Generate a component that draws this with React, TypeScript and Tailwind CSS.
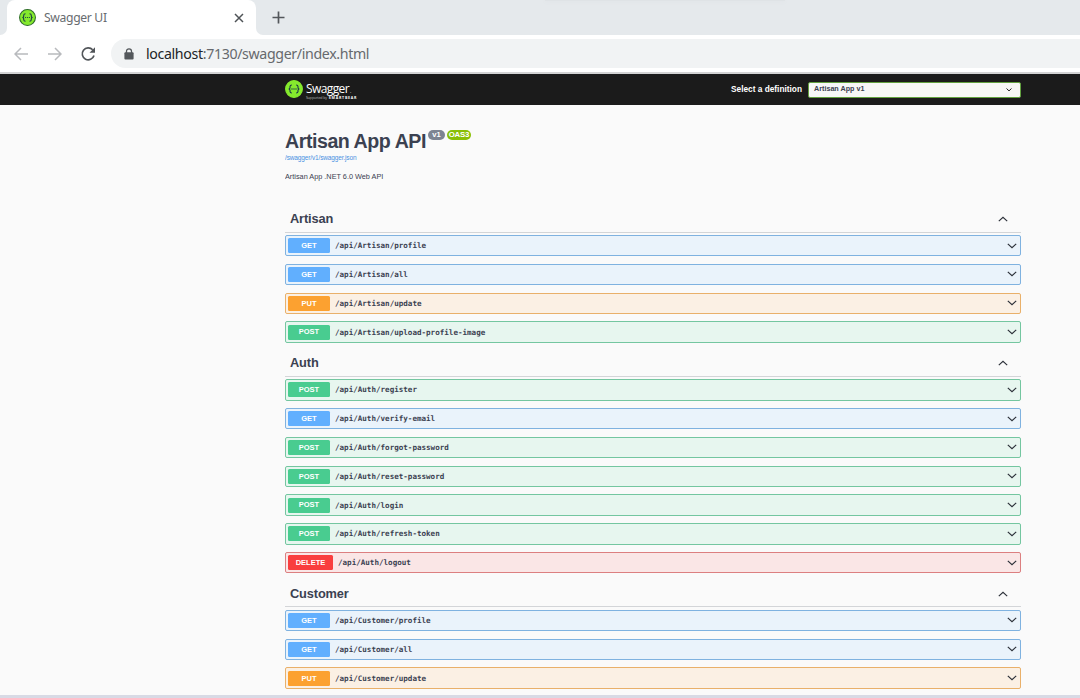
type Method = "GET" | "PUT" | "POST" | "DELETE";

const rowStyles: Record<Method, string> = {
  GET: "border-[#7fb2e0] bg-[#eaf3fb]",
  PUT: "border-[#e9b06a] bg-[#fbf0e4]",
  POST: "border-[#74c6a0] bg-[#e7f6ef]",
  DELETE: "border-[#dc7f80] bg-[#fae6e6]",
};

const badgeStyles: Record<Method, string> = {
  GET: "w-[42px] bg-[#61affe]",
  PUT: "w-[42px] bg-[#fca130]",
  POST: "w-[42px] bg-[#49cc90]",
  DELETE: "w-[45px] bg-[#f93e3e]",
};

const sections: { name: string; operations: [Method, string][] }[] = [
  {
    name: "Artisan",
    operations: [
      ["GET", "/api/Artisan/profile"],
      ["GET", "/api/Artisan/all"],
      ["PUT", "/api/Artisan/update"],
      ["POST", "/api/Artisan/upload-profile-image"],
    ],
  },
  {
    name: "Auth",
    operations: [
      ["POST", "/api/Auth/register"],
      ["GET", "/api/Auth/verify-email"],
      ["POST", "/api/Auth/forgot-password"],
      ["POST", "/api/Auth/reset-password"],
      ["POST", "/api/Auth/login"],
      ["POST", "/api/Auth/refresh-token"],
      ["DELETE", "/api/Auth/logout"],
    ],
  },
  {
    name: "Customer",
    operations: [
      ["GET", "/api/Customer/profile"],
      ["GET", "/api/Customer/all"],
      ["PUT", "/api/Customer/update"],
    ],
  },
];

function SwaggerMark({ size, ring }: { size: number; ring: string }) {
  return (
    <svg width={size} height={size} viewBox="0 0 18 18" className="shrink-0" fill="none">
      <circle cx="9" cy="9" r="8.4" fill="#85ea2d" stroke={ring} strokeWidth="1.1" />
      <path
        d="M6.9 5c-1.4 0-1.9.4-1.9 1.5v1.2c0 .8-.4 1.3-1.4 1.3 1 0 1.4.5 1.4 1.3v1.2c0 1.1.5 1.5 1.9 1.5M11.1 5c1.4 0 1.9.4 1.9 1.5v1.2c0 .8.4 1.3 1.4 1.3-1 0-1.4.5-1.4 1.3v1.2c0 1.1-.5 1.5-1.9 1.5"
        stroke="#173647"
        strokeWidth="1.1"
      />
      <g fill="#173647">
        <circle cx="7" cy="9" r=".65" />
        <circle cx="9" cy="9" r=".65" />
        <circle cx="11" cy="9" r=".65" />
      </g>
    </svg>
  );
}

function Chevron({ up = false }: { up?: boolean }) {
  return (
    <svg width="10" height="6" viewBox="0 0 10 6" fill="none" className="shrink-0">
      <path d={up ? "M.8 5.2 5 1.3l4.2 3.9" : "M.8.8 5 4.7 9.2.8"} stroke="#2b2f38" strokeWidth="1.15" />
    </svg>
  );
}

function TabStrip() {
  return (
    <div className="flex h-[35px] bg-[#e5e9ec]">
      <div className="flex w-[7px] items-end bg-white">
        <div className="h-full w-full rounded-br-[7px] bg-[#e5e9ec]" />
      </div>
      <div className="bg-[#e5e9ec]">
        <div className="flex h-[35px] w-[249px] items-center rounded-t-[8px] bg-white pr-[12px] pl-[12px]">
          <SwaggerMark size={17} ring="#2d6b2a" />
          <span className="ml-[8px] pt-[2px] text-[12.2px] tracking-[-0.35px] text-[#686c70]">Swagger UI</span>
          <svg width="10" height="10" viewBox="0 0 10 10" className="ml-auto">
            <path d="m1 1 8 8M9 1 1 9" stroke="#4f5357" strokeWidth="1.5" />
          </svg>
        </div>
      </div>
      <div className="w-[7px] bg-white">
        <div className="h-full rounded-bl-[7px] bg-[#e5e9ec]" />
      </div>
      <svg width="13" height="13" viewBox="0 0 13 13" className="mt-[11px] ml-[9px]">
        <path d="M6.5.5v12M.5 6.5h12" stroke="#53575b" strokeWidth="1.7" />
      </svg>
      <div className="ml-[260px] h-px w-[240px] bg-[#dfe3e6] shadow-[0_0_4px_#d9dde0]" />
    </div>
  );
}

function AddressBar() {
  return (
    <div className="flex h-[39px] items-center border-b-2 border-[#d2d3d4] bg-white">
      <svg width="14" height="14" viewBox="0 0 14 14" fill="none" className="ml-[14px]">
        <path d="M14 7H1.2M7 1 1 7l6 6" stroke="#b8babd" strokeWidth="1.5" />
      </svg>
      <svg width="14" height="14" viewBox="0 0 14 14" fill="none" className="ml-[20px]">
        <path d="M0 7h12.8M7 1l6 6-6 6" stroke="#b8babd" strokeWidth="1.5" />
      </svg>
      <svg width="16" height="16" viewBox="0 0 16 16" className="ml-[18px]">
        <path d="M12.7 3.8A6 6 0 1 0 14 9.5" fill="none" stroke="#515559" strokeWidth="1.7" />
        <path d="M15 1.3v5.5H9.5z" fill="#515559" />
      </svg>
      <div className="ml-[15px] flex h-[29px] grow items-center rounded-l-full bg-[#f1f3f4] pl-[13px]">
        <svg width="10" height="12" viewBox="0 0 10 12">
          <path d="M2.5 5V3.3a2.5 2.5 0 0 1 5 0V5" fill="none" stroke="#54585c" strokeWidth="1.3" />
          <rect x=".4" y="4.3" width="9.2" height="7.3" rx="1" fill="#54585c" />
        </svg>
        <span className="ml-[12px] pt-px text-[14.2px] tracking-[-0.36px] whitespace-nowrap text-[#66696d]">
          <span className="text-[#222427]">localhost</span>:7130/swagger/index.html
        </span>
      </div>
    </div>
  );
}

function TopBar() {
  return (
    <header className="h-[31px] bg-[#1b1b1b]">
      <div className="ml-[285px] flex h-full w-[736px] items-center">
        <div className="-mt-[2px]">
          <SwaggerMark size={18} ring="#85ea2d" />
        </div>
        <div className="ml-[3px] flex flex-col pt-[2px] font-['Open_Sans','Noto_Sans',sans-serif] text-white">
          <span className="h-[14px] text-[12px] leading-[16px] tracking-[-0.6px]">
            Swagger<span className="ml-px text-[5px]">.</span>
          </span>
          <span className="flex h-[5px] items-center gap-[2px] text-[3.6px] leading-[5px] whitespace-nowrap">
            <span className="text-[#b5b5b5] tracking-[-0.15px]">Supported by</span>
            <b className="tracking-[0.75px]">SMARTBEAR</b>
          </span>
        </div>
        <div className="ml-auto flex items-center">
          <span className="text-[8.3px] font-bold text-white">Select a definition</span>
          <div className="ml-[6px] flex h-[16px] w-[213px] items-center justify-between rounded-[2px] border border-[#62a03f] bg-[#f7f7f7] pr-[8px] pl-[5px] text-[7.2px] font-bold text-[#3b4151]">
            Artisan App v1
            <svg width="6" height="4" viewBox="0 0 6 4" fill="none">
              <path d="m.5.5 2.5 2.4L5.5.5" stroke="#222" />
            </svg>
          </div>
        </div>
      </div>
    </header>
  );
}

function Info() {
  return (
    <div className="h-[101px] pt-[24px] text-[#3b4151]">
      <div className="flex h-[24px] items-start">
        <h1 className="text-[19.6px] leading-[25px] font-bold tracking-[-0.45px] whitespace-nowrap">Artisan App API</h1>
        <span className="mt-px ml-[2px] flex h-[10px] w-[17px] items-center justify-center rounded-full bg-[#7d8492] text-[7.6px] font-bold text-white">
          v1
        </span>
        <span className="mt-px ml-[2px] flex h-[10px] w-[24px] items-center justify-center rounded-full bg-[#89bf04] text-[7.8px] font-bold tracking-[-0.15px] text-white">
          OAS3
        </span>
      </div>
      <a className="block text-[6.5px] leading-[9px] tracking-[-0.14px] text-[#4990e2]">/swagger/v1/swagger.json</a>
      <p className="mt-[10px] text-[7.3px] leading-[10px]">Artisan App .NET 6.0 Web API</p>
    </div>
  );
}

function Operation({ method, path }: { method: Method; path: string }) {
  return (
    <div className={`mb-[7.42px] flex h-[21.43px] items-center rounded-[2px] border pr-[3px] pl-[2px] ${rowStyles[method]}`}>
      <span
        className={`flex h-[15px] items-center justify-center rounded-[1.5px] text-[7.5px] font-bold text-white ${badgeStyles[method]}`}
      >
        {method}
      </span>
      <span className="ml-[5px] grow pt-px font-['DejaVu_Sans_Mono',monospace] text-[7.57px] leading-[10px] font-bold whitespace-nowrap text-[#3b4151]">
        {path}
      </span>
      <Chevron />
    </div>
  );
}

export default function App() {
  return (
    <div className="flex h-[698px] w-[1080px] flex-col overflow-hidden bg-[#fafafa] font-['Liberation_Sans',sans-serif]">
      <div className="shrink-0 font-['Noto_Sans','Open_Sans',sans-serif]">
        <TabStrip />
        <AddressBar />
      </div>
      <div className="shrink-0">
        <TopBar />
      </div>
      <main className="ml-[285px] h-[590px] w-[736px] shrink-0 overflow-hidden">
        <Info />
        {sections.map((section) => (
          <section key={section.name}>
            <div className="mb-[2.3px] flex h-[26.6px] items-center justify-between border-b border-[#d3d5d8] pr-[13px] pl-[5px]">
              <h2 className="text-[12.8px] leading-[16px] font-bold tracking-[-0.13px] text-[#3b4151]">{section.name}</h2>
              <Chevron up />
            </div>
            {section.operations.map(([method, path]) => (
              <Operation key={path} method={method} path={path} />
            ))}
          </section>
        ))}
      </main>
      <div className="h-[3px] shrink-0 bg-[#d8dae5]" />
    </div>
  );
}
